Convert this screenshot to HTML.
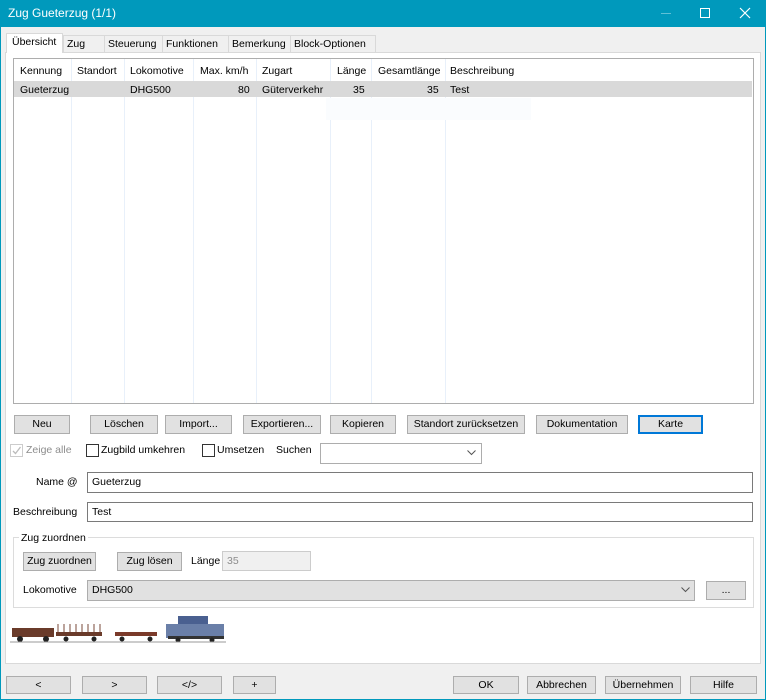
<!DOCTYPE html>
<html><head><meta charset="utf-8"><style>
*{box-sizing:border-box;margin:0;padding:0}
body{width:766px;height:700px;background:#0099bc;font-family:"Liberation Sans",sans-serif;font-size:10.5px;color:#000;position:relative;overflow:hidden}
.a{position:absolute}
#win{position:absolute;left:1px;top:27px;width:764px;height:672px;background:#f0f0f0}
.t{white-space:nowrap;line-height:14px}
.btn{position:absolute;background:#e1e1e1;border:1px solid #adadad;text-align:center;line-height:17px;white-space:nowrap}
.inp{position:absolute;background:#fff;border:1px solid #7a7a7a;padding-left:4px;line-height:18px}
.tab{position:absolute;top:35px;height:17px;border:1px solid #d9d9d9;border-bottom:none;background:#f0f0f0;line-height:16px;padding-left:3px}
.col{position:absolute;top:59px;width:1px;height:344px;background:#e8f0fa}
.cb{position:absolute;width:13px;height:13px;border:1px solid #333;background:#fff}
</style></head><body>
<div class="a t" style="left:8px;top:6px;color:#fff;font-size:12px">Zug Gueterzug (1/1)</div>
<div class="a" style="left:661px;top:13px;width:10px;height:1px;background:#5fc0d6"></div>
<div class="a" style="left:700px;top:8px;width:10px;height:10px;border:1px solid #fff"></div>
<svg class="a" style="left:739px;top:7px" width="12" height="12"><path d="M1 1L11 11M11 1L1 11" stroke="#fff" stroke-width="1.2"/></svg>
<div id="win"></div>
<div class="a" style="left:5px;top:52px;width:756px;height:612px;background:#fff;border:1px solid #d9d9d9"></div>
<div class="tab" style="left:63px;width:42px">Zug</div>
<div class="tab" style="left:104px;width:59px">Steuerung</div>
<div class="tab" style="left:162px;width:67px">Funktionen</div>
<div class="tab" style="left:228px;width:63px">Bemerkung</div>
<div class="tab" style="left:290px;width:86px">Block-Optionen</div>
<div class="tab" style="left:6px;top:33px;height:20px;width:57px;background:#fff;line-height:17px;padding-left:5px">Übersicht</div>
<div class="a" style="left:13px;top:58px;width:741px;height:346px;border:1px solid #adadad;background:#fff"></div>
<div class="col" style="left:71px"></div><div class="col" style="left:124px"></div><div class="col" style="left:193px"></div><div class="col" style="left:256px"></div><div class="col" style="left:330px"></div><div class="col" style="left:371px"></div><div class="col" style="left:445px"></div>
<div class="a" style="left:14px;top:81px;width:738px;height:16px;background:#d9d9d9"></div>
<div class="a t" style="left:20px;top:64px">Kennung</div>
<div class="a t" style="left:77px;top:64px">Standort</div>
<div class="a t" style="left:130px;top:64px">Lokomotive</div>
<div class="a t" style="left:200px;top:64px">Max. km/h</div>
<div class="a t" style="left:262px;top:64px">Zugart</div>
<div class="a t" style="left:337px;top:64px">Länge</div>
<div class="a t" style="left:378px;top:64px">Gesamtlänge</div>
<div class="a t" style="left:450px;top:64px">Beschreibung</div>
<div class="a t" style="left:20px;top:83px">Gueterzug</div>
<div class="a t" style="left:130px;top:83px">DHG500</div>
<div class="a t" style="left:238px;top:83px">80</div>
<div class="a t" style="left:262px;top:83px">Güterverkehr</div>
<div class="a t" style="left:353px;top:83px">35</div>
<div class="a t" style="left:427px;top:83px">35</div>
<div class="a t" style="left:450px;top:83px">Test</div>
<div class="a" style="left:326px;top:98px;width:205px;height:22px;background:#fafcfe"></div>
<div class="btn" style="left:14px;top:415px;width:56px;height:19px">Neu</div>
<div class="btn" style="left:90px;top:415px;width:68px;height:19px">Löschen</div>
<div class="btn" style="left:165px;top:415px;width:67px;height:19px">Import...</div>
<div class="btn" style="left:243px;top:415px;width:78px;height:19px">Exportieren...</div>
<div class="btn" style="left:330px;top:415px;width:66px;height:19px">Kopieren</div>
<div class="btn" style="left:407px;top:415px;width:118px;height:19px">Standort zurücksetzen</div>
<div class="btn" style="left:536px;top:415px;width:92px;height:19px">Dokumentation</div>
<div class="btn" style="left:638px;top:415px;width:65px;height:19px;border:2px solid #0078d7;line-height:15px">Karte</div>
<div class="cb" style="left:10px;top:444px;border-color:#ccc"></div>
<svg class="a" style="left:11px;top:445px" width="11" height="11"><path d="M2 6L4.5 8.5L9.5 2" stroke="#bbb" fill="none" stroke-width="1.3"/></svg>
<div class="a t" style="left:26px;top:443px;color:#8d8d8d">Zeige alle</div>
<div class="cb" style="left:86px;top:444px"></div>
<div class="a t" style="left:101px;top:443px">Zugbild umkehren</div>
<div class="cb" style="left:202px;top:444px"></div>
<div class="a t" style="left:217px;top:443px">Umsetzen</div>
<div class="a t" style="left:276px;top:443px">Suchen</div>
<div class="inp" style="left:320px;top:443px;width:162px;height:21px;border-color:#adadad"></div>
<svg class="a" style="left:467px;top:450px" width="9" height="6"><path d="M0.5 0.5L4.5 4.5L8.5 0.5" stroke="#555" fill="none"/></svg>
<div class="a t" style="left:36px;top:475px">Name @</div>
<div class="inp" style="left:87px;top:472px;width:666px;height:21px">Gueterzug</div>
<div class="a t" style="left:13px;top:505px">Beschreibung</div>
<div class="inp" style="left:87px;top:502px;width:666px;height:20px">Test</div>
<div class="a" style="left:13px;top:537px;width:741px;height:71px;border:1px solid #dcdcdc"></div>
<div class="a t" style="left:19px;top:531px;background:#fff;padding:0 2px">Zug zuordnen</div>
<div class="btn" style="left:23px;top:552px;width:73px;height:19px">Zug zuordnen</div>
<div class="btn" style="left:117px;top:552px;width:65px;height:19px">Zug lösen</div>
<div class="a t" style="left:191px;top:554px">Länge</div>
<div class="inp" style="left:222px;top:551px;width:89px;height:20px;background:#f0f0f0;border-color:#ccc;color:#8d8d8d">35</div>
<div class="a t" style="left:23px;top:583px">Lokomotive</div>
<div class="inp" style="left:87px;top:580px;width:608px;height:21px;background:#e1e1e1;border-color:#adadad">DHG500</div>
<svg class="a" style="left:681px;top:587px" width="9" height="6"><path d="M0.5 0.5L4.5 4.5L8.5 0.5" stroke="#555" fill="none"/></svg>
<div class="btn" style="left:706px;top:581px;width:40px;height:19px">...</div>
<svg class="a" style="left:8px;top:614px" width="220" height="30">
<rect x="4" y="14" width="42" height="9" fill="#6a3b2a"/><circle cx="12" cy="25" r="3" fill="#222"/><circle cx="38" cy="25" r="3" fill="#222"/>
<rect x="48" y="18" width="46" height="4" fill="#6a3b2a"/><path d="M50 18V10M56 18V10M62 18V10M68 18V10M74 18V10M80 18V10M86 18V10M92 18V10" stroke="#7a4a3a"/><circle cx="58" cy="25" r="2.5" fill="#222"/><circle cx="86" cy="25" r="2.5" fill="#222"/>
<rect x="107" y="18" width="42" height="4" fill="#7a3a2a"/><circle cx="114" cy="25" r="2.5" fill="#222"/><circle cx="142" cy="25" r="2.5" fill="#222"/>
<rect x="170" y="2" width="30" height="8" fill="#4a6090"/><rect x="158" y="10" width="58" height="14" fill="#6a7fa8"/><rect x="160" y="22" width="56" height="3" fill="#333"/><circle cx="170" cy="26" r="2.5" fill="#222"/><circle cx="204" cy="26" r="2.5" fill="#222"/>
<path d="M2 28H218" stroke="#999"/>
</svg>
<div class="btn" style="left:6px;top:676px;width:65px;height:18px">&lt;</div>
<div class="btn" style="left:82px;top:676px;width:65px;height:18px">&gt;</div>
<div class="btn" style="left:157px;top:676px;width:65px;height:18px">&lt;/&gt;</div>
<div class="btn" style="left:233px;top:676px;width:43px;height:18px">+</div>
<div class="btn" style="left:453px;top:676px;width:66px;height:18px">OK</div>
<div class="btn" style="left:527px;top:676px;width:69px;height:18px">Abbrechen</div>
<div class="btn" style="left:605px;top:676px;width:76px;height:18px">Übernehmen</div>
<div class="btn" style="left:690px;top:676px;width:67px;height:18px">Hilfe</div>
</body></html>
